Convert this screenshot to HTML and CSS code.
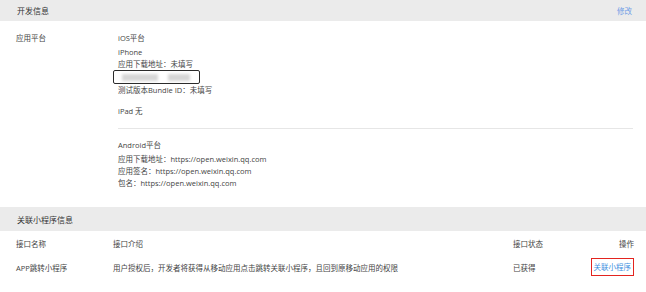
FILE: index.html
```html
<!DOCTYPE html>
<html lang="zh-CN">
<head>
    <meta charset="UTF-8">
    <meta name="viewport" content="width=device-width, initial-scale=1.0">
    <title>开发信息</title>
    <link rel="stylesheet" href="styles.css">
</head>
<body>
    <div class="section-head">
        <span class="section-title">开发信息</span>
        <a class="edit-link" href="#">修改</a>
    </div>

    <div class="info-body">
        <div class="info-label">应用平台</div>
        <div class="info-value">
            <div class="platform">
                <div class="platform-name">iOS平台</div>
                <div class="line">iPhone</div>
                <div class="line">应用下载地址：未填写</div>
                <div class="masked">
                    <span class="blur-bar wide"></span>
                    <span class="blur-bar"></span>
                </div>
                <div class="line">测试版本Bundle ID：未填写</div>
                <div class="line ipad">iPad 无</div>
            </div>

            <div class="divider"></div>

            <div class="platform">
                <div class="platform-name">Android平台</div>
                <div class="line">应用下载地址：https://open.weixin.qq.com</div>
                <div class="line">应用签名：https://open.weixin.qq.com</div>
                <div class="line">包名：https://open.weixin.qq.com</div>
            </div>
        </div>
    </div>

    <div class="section-head second">
        <span class="section-title">关联小程序信息</span>
    </div>

    <div class="api-table">
        <div class="api-row head">
            <div>接口名称</div>
            <div>接口介绍</div>
            <div>接口状态</div>
            <div class="op">操作</div>
        </div>
        <div class="api-row">
            <div>APP跳转小程序</div>
            <div>用户授权后，开发者将获得从移动应用点击跳转关联小程序，且回到原移动应用的权限</div>
            <div>已获得</div>
            <div class="op"><a class="bind-link" href="#">关联小程序</a></div>
        </div>
    </div>
</body>
</html>
```

FILE: styles.css
```css
* {
    margin: 0;
    padding: 0;
    box-sizing: border-box;
}

body {
    font-family: 'Open Sans', 'Noto Sans CJK SC', sans-serif;
    font-size: 7.5px;
    color: #444;
    background: #fff;
    width: 646px;
    overflow: hidden;
}

a {
    text-decoration: none;
}

.section-head {
    height: 21px;
    background: #ebebeb;
    display: flex;
    justify-content: space-between;
    align-items: center;
    padding: 0 14px 0 17px;
}

.section-head.second {
    height: 24px;
    margin-top: 18px;
}

.section-title {
    font-size: 8px;
    color: #333;
}

.edit-link {
    color: #6f9de6;
}

.info-body {
    display: flex;
    padding: 11px 13px 0 16px;
}

.info-label {
    width: 102px;
    line-height: 12px;
}

.info-value {
    flex: 1;
}

.line,
.platform-name {
    line-height: 12px;
}

.platform-name {
    margin-bottom: 2px;
}

.masked {
    width: 87px;
    height: 14px;
    margin: 0 0 0 -5px;
    border: 1.5px solid #2b2b2b;
    border-radius: 2px;
    display: flex;
    align-items: center;
    gap: 10px;
    padding: 0 8px;
    overflow: hidden;
}

.blur-bar {
    height: 7px;
    width: 22px;
    background: #d6d6d6;
    filter: blur(1.5px);
}

.blur-bar.wide {
    width: 36px;
}

.ipad {
    margin-top: 9px;
}

.divider {
    height: 1px;
    background: #e6e6e6;
    margin: 11px 0 10px;
}

.api-table {
    padding: 0 12px 0 16px;
}

.api-row {
    display: grid;
    grid-template-columns: 97px 400px 1fr auto;
    align-items: center;
    height: 24px;
}

.op {
    text-align: right;
}

.bind-link {
    display: inline-block;
    color: #3d8fe0;
    border: 1.5px solid #e3241f;
    padding: 2px 2px;
    line-height: 12px;
}
```
